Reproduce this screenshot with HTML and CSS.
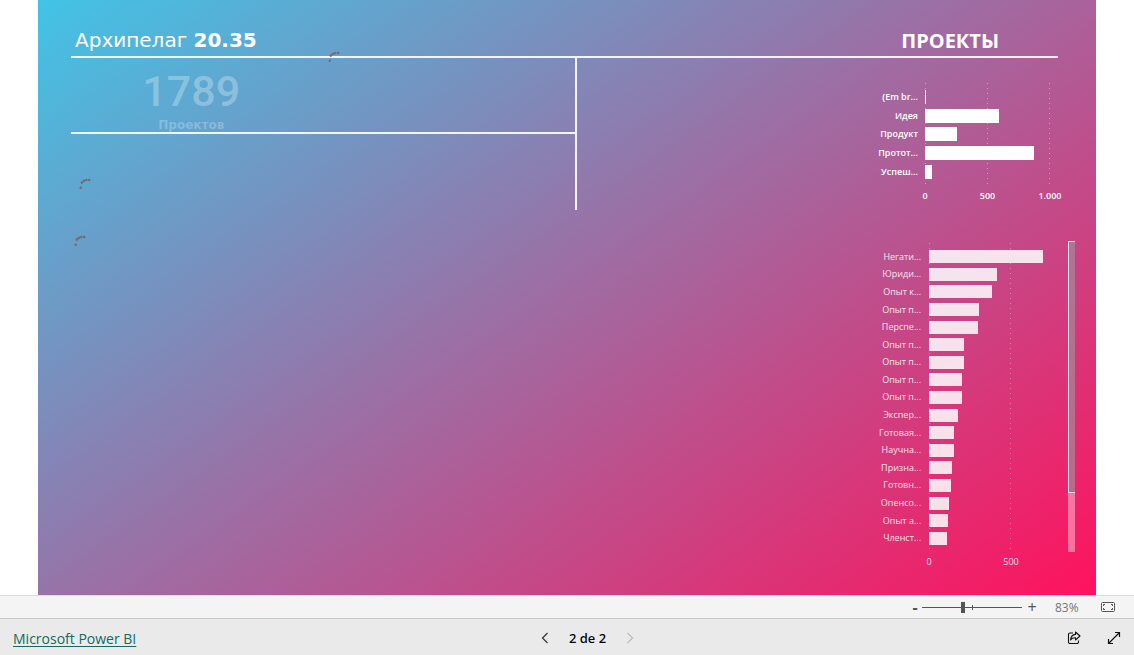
FILE: index.html
```html
<!DOCTYPE html>
<html lang="pt">
<head>
<meta charset="utf-8">
<title>Microsoft Power BI</title>
<link rel="stylesheet" href="styles.css">
</head>
<body>
<main class="report">
  <svg class="spinner spinner-top" viewBox="0 0 12 12" aria-hidden="true"><use href="#dots"/></svg>
  <svg class="spinner spinner-middle" viewBox="0 0 12 12" aria-hidden="true"><g id="dots"><circle cx="1.8" cy="9.8" r="1.3"/><circle cx="2.8" cy="4.6" r="1.3"/><circle cx="4.8" cy="2.9" r="1.3"/><circle cx="7.3" cy="2" r="1.3"/><circle cx="10.2" cy="2" r="1.3"/></g></svg>
  <svg class="spinner spinner-bottom" viewBox="0 0 12 12" aria-hidden="true"><use href="#dots"/></svg>
  <header class="report-header">
    <h1 class="title">Архипелаг <b>20.35</b></h1>
    <h2 class="section-title">ПРОЕКТЫ</h2>
  </header>
  <div class="report-body">
    <section class="summary">
      <div class="card">
        <div class="card-value">1789</div>
        <div class="card-label">Проектов</div>
      </div>
    </section>
    <div class="charts">
      <section class="chart stages">
        <div class="labels"><span>(Em br...</span><span>Идея</span><span>Продукт</span><span>Протот...</span><span>Успеш...</span></div>
        <div class="plot">
          <div class="gridlines"><i></i><i></i><i></i></div>
          <div class="bars"><div class="bar" style="width:1px"></div><div class="bar" style="width:74px"></div><div class="bar" style="width:32px"></div><div class="bar" style="width:109px"></div><div class="bar" style="width:7px"></div></div>
          <div class="ticks"><span>0</span><span>500</span><span>1.000</span></div>
        </div>
      </section>
      <section class="chart criteria">
        <div class="labels"><span>Негати...</span><span>Юриди...</span><span>Опыт к...</span><span>Опыт п...</span><span>Перспе...</span><span>Опыт п...</span><span>Опыт п...</span><span>Опыт п...</span><span>Опыт п...</span><span>Экспер...</span><span>Готовая...</span><span>Научна...</span><span>Призна...</span><span>Готовн...</span><span>Опенсо...</span><span>Опыт а...</span><span>Членст...</span></div>
        <div class="plot">
          <div class="gridlines"><i></i><i></i></div>
          <div class="bars"><div class="bar" style="width:114px"></div><div class="bar" style="width:68px"></div><div class="bar" style="width:63px"></div><div class="bar" style="width:50px"></div><div class="bar" style="width:49px"></div><div class="bar" style="width:35px"></div><div class="bar" style="width:35px"></div><div class="bar" style="width:33px"></div><div class="bar" style="width:33px"></div><div class="bar" style="width:29px"></div><div class="bar" style="width:25px"></div><div class="bar" style="width:25px"></div><div class="bar" style="width:23px"></div><div class="bar" style="width:22px"></div><div class="bar" style="width:20px"></div><div class="bar" style="width:19px"></div><div class="bar" style="width:18px"></div></div>
          <div class="ticks"><span>0</span><span>500</span></div>
        </div>
        <div class="scroll-track"><div class="scroll-thumb"></div></div>
      </section>
    </div>
  </div>
</main>
<div class="zoom-bar">
  <button class="zoom-button minus" type="button" aria-label="Reduzir">-</button>
  <input class="zoom-slider" type="range" min="0" max="100" value="41" aria-label="Zoom">
  <button class="zoom-button" type="button" aria-label="Ampliar">+</button>
  <span class="zoom-value">83%</span>
  <button class="icon-button" type="button" aria-label="Ajustar à página">
    <svg width="14" height="10" viewBox="0 0 14 10" fill="none" stroke="#555"><rect x=".5" y=".5" width="13" height="9" rx="1"/><path d="M2.5 4V2.5H4M10 2.5h1.500V4M11.500 6v1.500H10M4 7.500H2.500V6"/></svg>
  </button>
</div>
<footer class="footer">
  <div class="footer-side"><a class="brand" href="#">Microsoft Power BI</a></div>
  <nav class="pager">
    <button class="icon-button" type="button" aria-label="Página anterior"><svg width="8" height="12" viewBox="0 0 8 12" fill="none" stroke="#333" stroke-width="1.200"><path d="M6.500 1 1.500 6l5 5"/></svg></button>
    <span class="page">2 de 2</span>
    <button class="icon-button" type="button" aria-label="Próxima página" disabled><svg width="8" height="12" viewBox="0 0 8 12" fill="none" stroke="#bbb" stroke-width="1.200"><path d="m1.500 1 5 5-5 5"/></svg></button>
  </nav>
  <div class="footer-side actions">
    <button class="icon-button" type="button" aria-label="Compartilhar"><svg width="14" height="14" viewBox="0 0 14 14" fill="none" stroke="#111" stroke-width="1.100" stroke-linejoin="round"><path d="M6 2H3A1.500 1.500 0 0 0 1.500 3.500v7.500A1.500 1.500 0 0 0 3 12.500h7A1.500 1.500 0 0 0 11.500 11V9.500"/><path d="M8.500 1 13 5 8.500 9V6.800C6.300 6.600 4.800 7.300 3.600 9 3.800 5.800 5.600 3.600 8.500 3.400z"/></svg></button>
    <button class="icon-button" type="button" aria-label="Tela cheia"><svg width="14" height="14" viewBox="0 0 14 14" fill="none" stroke="#111" stroke-width="1.200"><path d="M1.500 12.500l11-11M8 1.500h4.500V6M1.500 8v4.500H6"/></svg></button>
  </div>
</footer>
</body>
</html>
```
FILE: styles.css
```css
* { box-sizing: border-box; }
body {
  margin: 0;
  min-height: 100vh;
  display: flex;
  flex-direction: column;
  background: #fff;
  font-family: "Open Sans", "Noto Sans", sans-serif;
}
button { padding: 0; border: 0; background: none; font: inherit; }
.report {
  position: relative;
  flex: 1;
  margin: 0 38px;
  color: #fff;
  background: linear-gradient(145deg, #41c4e6, #ff125d);
}
.report-header {
  display: flex;
  justify-content: space-between;
  height: 58px;
  margin: 0 38px 0 33px;
  padding: 26px 59px 0 4px;
  border-bottom: 2px solid rgba(255, 255, 255, .9);
}
.title {
  margin: 0;
  font: 20px/28px "DejaVu Sans", sans-serif;
}
.section-title {
  margin: 0;
  font-size: 20px;
  line-height: 30px;
  font-weight: 700;
}
.report-body {
  display: flex;
  justify-content: space-between;
  align-items: flex-start;
  margin: 0 20px 0 33px;
}
.summary {
  width: 50.3%;
  height: 152px;
  border-right: 2px solid rgba(255, 255, 255, .9);
}
.card {
  height: 76px;
  padding: 9px 263px 0 0;
  border-bottom: 2px solid rgba(255, 255, 255, .9);
  text-align: center;
}
.card-value {
  color: rgba(255, 255, 255, .3);
  font: 500 43px/48px Roboto, sans-serif;
}
.card-label {
  color: rgba(255, 255, 255, .25);
  font: bold 12px/20px "DejaVu Sans", sans-serif;
}
.charts { width: 205px; margin-right: 1px; }
.chart {
  position: relative;
  display: flex;
  gap: 7px;
  font-size: 9px;
  font-weight: 600;
}
.stages { padding-top: 25px; }
.criteria { padding-top: 40px; gap: 8px; font-weight: 500; opacity: .85; }
.labels, .bars {
  display: grid;
  grid-auto-rows: 1fr;
  align-items: center;
}
.labels {
  width: 48px;
  margin-top: 5px;
  text-align: right;
  white-space: nowrap;
  line-height: 14px;
}
.criteria .labels { width: 51px; }
.stages .labels, .stages .bars { height: 93px; }
.criteria .labels, .criteria .bars { height: 299px; }
.plot {
  position: relative;
  width: 125px;
  padding-top: 5px;
}
.bars { position: relative; }
.bar { height: 14px; background: #fff; }
.criteria .bar { height: 13px; }
.gridlines, .ticks { display: flex; justify-content: space-between; }
.gridlines {
  position: absolute;
  inset: 0 0 16px;
}
.gridlines i {
  width: 1px;
  background: repeating-linear-gradient(rgba(255, 255, 255, .4) 0 1px, transparent 1px 5px);
}
.ticks { margin-top: 8px; line-height: 14px; }
.ticks span {
  display: flex;
  justify-content: center;
  width: 0;
}
.criteria .ticks, .criteria .gridlines { width: 82px; }
.criteria .plot { width: 122px; }
.scroll-track {
  width: 7px;
  height: 311px;
  margin: -2px 0 0 auto;
  background: rgba(255, 255, 255, .45);
}
.scroll-thumb {
  height: 252px;
  border: 1px solid #fff;
  border-right: 0;
  background: rgba(120, 110, 120, .55);
}
.spinner {
  position: absolute;
  width: 12px;
  height: 12px;
  fill: #716c70;
}
.spinner-top { left: 290px; top: 51px; }
.spinner-middle { left: 41px; top: 178px; }
.spinner-bottom { left: 36px; top: 235px; }
.zoom-bar {
  display: flex;
  align-items: center;
  justify-content: flex-end;
  height: 23px;
  padding-right: 19px;
  border-top: 1px solid #ddd;
  background: #f4f4f4;
  color: #555;
  font-size: 12px;
}
.zoom-button { width: 20px; color: #555; font-size: 16px; line-height: 20px; }
.zoom-button.minus { width: 14px; font-weight: 700; }
.zoom-slider {
  width: 100px;
  height: 12px;
  margin: 0;
  appearance: none;
  background:
    linear-gradient(#555, #555) 50px 50% / 1px 5px no-repeat,
    linear-gradient(#555, #555) 0 50% / 100% 1px no-repeat;
}
.zoom-slider::-webkit-slider-thumb {
  appearance: none;
  width: 4px;
  height: 11px;
  background: #555;
}
.zoom-value { width: 36px; margin: 0 10px 0 13px; color: #777; }
.icon-button { display: flex; align-items: center; justify-content: center; }
.icon-button svg { display: block; }
.footer {
  display: flex;
  align-items: center;
  height: 37px;
  padding: 2px 13px 0;
  border-top: 1px solid #c8c8c8;
  background: #eaeaea;
  font-size: 14px;
}
.footer-side { flex: 1; }
.brand { color: #116b62; text-underline-offset: 2px; }
.pager { display: flex; align-items: center; gap: 20px; margin-left: 41px; }
.page { color: #000; font-family: "Noto Sans", sans-serif; font-weight: 500; font-size: 13px; }
.actions { display: flex; justify-content: flex-end; gap: 26px; }
```
